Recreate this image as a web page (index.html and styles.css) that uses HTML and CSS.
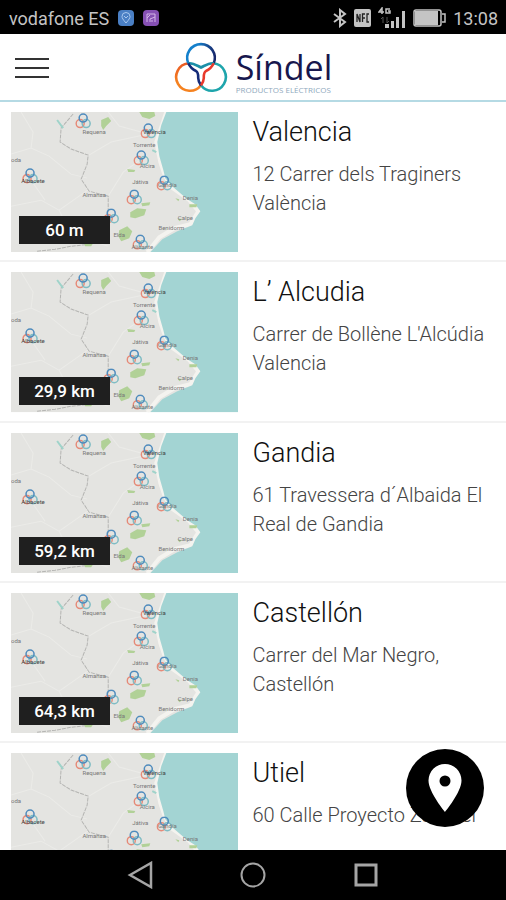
FILE: index.html
```html
<!DOCTYPE html>
<html lang="es">
<head>
    <meta charset="UTF-8">
    <meta name="viewport" content="width=device-width, initial-scale=1.0">
    <title>Síndel</title>
    <link rel="stylesheet" href="styles.css">
</head>
<body>
    <!-- Shared drawings -->
    <svg class="defs" width="0" height="0" aria-hidden="true">
        <symbol id="marker" viewBox="0 0 16 16">
            <g fill="none" stroke-width="1.5">
                <circle cx="5" cy="10.5" r="4" stroke="#e58a78"/>
                <circle cx="11" cy="10.5" r="4" stroke="#7fbcc4"/>
                <circle cx="8" cy="5" r="4" stroke="#4f8bbd"/>
            </g>
        </symbol>
        <symbol id="map" viewBox="0 0 227 140">
            <rect width="227" height="140" fill="#e4e4e1"/>
            <g fill="none" stroke="#ebebe8">
                <path d="M0 42 20 36 38 44 60 62 76 66M10 0 22 20 20 36M0 94 30 88 48 98 78 77M76 44 100 30 137 22M130 47 112 60 97 84M48 98 60 122 97 134M20 68 34 88M97 0 108 14 137 22"/>
            </g>
            <path d="M155 0 150 15 145 30 149 50 153 62 160 75 178 88 187 99 179 112 163 116 148 125 136 140" fill="none" stroke="#f4f3ef" stroke-width="4"/>
            <path d="M155 0 150 13 146 30 148 44 152 58 154 66 162 75 176 87 184 92 189 99 184 106 181 113 166 119 151 127 139 140H227V0Z" fill="#a3d4d3"/>
            <path d="M62 2 50 16 49 30 60 37 77 43 76 52 70 67 78 79 97 84 97 102M26 139 44 137 60 134 78 132" fill="none" stroke="#b4b4b2" stroke-dasharray="4 1"/>
            <path d="M46 8 52 16M141 38 145 40" stroke="#9fd3ca" stroke-width="2"/>
            <g fill="#b1d197">
                <path d="M128 0H143L144 4 138 7 131 5ZM90 8 97 5 100 9 95 14 92 18 90 14ZM119 100 126 96 135 97 133 103 124 106 119 105ZM108 118 116 114 121 119 118 126 110 129 107 124ZM116 57 124 58 123 60 117 60ZM130 91 139 90 138 93 131 94ZM178 92 186 92 185 95 178 95ZM73 131 82 131 80 134 74 134ZM164 86 168 87 167 89ZM166 106 171 107 168 109Z"/>
            </g>
            <use href="#marker" x="64" y="1" width="16" height="16"/>
            <use href="#marker" x="129" y="11" width="16" height="16"/>
            <use href="#marker" x="122" y="38" width="16" height="16"/>
            <use href="#marker" x="145" y="63" width="16" height="16"/>
            <use href="#marker" x="115" y="77" width="16" height="16"/>
            <use href="#marker" x="11" y="56" width="16" height="16"/>
            <use href="#marker" x="92" y="96" width="16" height="16"/>
            <use href="#marker" x="121" y="122" width="16" height="16"/>
            <g class="places">
                <text x="83" y="22">Requena</text>
                <text x="143" y="22" class="city">Valencia</text>
                <text x="133" y="35">Torrente</text>
                <text x="136" y="56">Alcira</text>
                <text x="129" y="72">Játiva</text>
                <text x="156" y="75">Gandía</text>
                <text x="22" y="71" class="city">Albacete</text>
                <text x="5" y="50">oda</text>
                <text x="83" y="85">Almansa</text>
                <text x="179" y="88">Denia</text>
                <text x="174" y="108">Calpe</text>
                <text x="160" y="118">Benidorm</text>
                <text x="108" y="125">Elda</text>
                <text x="131" y="137">Alicante</text>
            </g>
        </symbol>
    </svg>

    <div class="status-bar">
        <span>vodafone ES</span>
        <svg width="16" height="16" viewBox="0 0 16 16">
            <rect width="16" height="16" rx="4" fill="#4a7fc4"/>
            <path d="M8 13C5 9.500 4 8 4 6.500A4 4 0 0 1 12 6.500C12 8 11 9.500 8 13ZM6 6 8 8 10 6" fill="none" stroke="#a9c8ee"/>
        </svg>
        <svg class="app-icon" width="16" height="16" viewBox="0 0 16 16">
            <rect width="16" height="16" rx="4" fill="#8650b4"/>
            <path d="M4 12V4H12V12M4 8 7 5M7 12V9L12 7M9 12V10" fill="none" stroke="#d3b5e8"/>
        </svg>
        <div class="status-icons">
            <svg width="14" height="20" viewBox="0 0 14 20">
                <path d="M1 6 12 14 7 18V2L12 6 1 14" fill="none" stroke="#c4c4c4" stroke-width="2"/>
            </svg>
            <svg width="17" height="18" viewBox="0 0 17 18">
                <rect width="17" height="18" rx="2" fill="#c4c4c4"/>
                <path d="M3 13V5L6 13V5M8.500 13V5H11M8.500 9H11M15 5H13V13H15" fill="none" stroke="#222" stroke-width="1.300"/>
            </svg>
            <svg width="28" height="22" viewBox="0 0 28 22">
                <path d="M4 7V1L1 5H6M12 2H8V6H12V4H10" fill="none" stroke="#c4c4c4" stroke-width="1.500"/>
                <path d="M5 10V16M3 12 5 10M9 10V16M9 16 11 14" stroke="#555"/>
                <path d="M7 17H11V21H7ZM13 14H16V21H13ZM18 10H21V21H18ZM24 4H27V21H24Z" fill="#c4c4c4"/>
            </svg>
            <svg class="battery" width="33" height="18" viewBox="0 0 33 18">
                <rect x="1" y="1" width="27" height="16" rx="2" fill="none" stroke="#c4c4c4" stroke-width="1.500"/>
                <rect x="2" y="2" width="23" height="14" fill="#c4c4c4"/>
                <path d="M29 5H32V13H29" fill="none" stroke="#c4c4c4" stroke-width="1.500"/>
            </svg>
            <span>13:08</span>
        </div>
    </div>

    <header class="header">
        <button class="menu-btn" aria-label="Menú">
            <svg width="34" height="22" viewBox="0 0 34 22">
                <path d="M0 2H34M0 11H34M0 20H34" stroke="#333" stroke-width="2"/>
            </svg>
        </button>
        <a class="logo" href="#">
            <svg width="54" height="52" viewBox="0 0 54 52">
                <defs>
                    <linearGradient id="blue" x1="0" y1="0" x2="1" y2="0"><stop offset="0.400" stop-color="#1480cc"/><stop offset="1" stop-color="#18286c"/></linearGradient>
                    <linearGradient id="orange" x1="0" y1="1" x2="0" y2="0"><stop offset="0.300" stop-color="#f58220"/><stop offset="1" stop-color="#ea5a24"/></linearGradient>
                </defs>
                <g fill="none" stroke-width="2.600">
                    <path d="M14.300 21.300A13.800 13.800 0 1 0 27 43.300" stroke="url(#orange)"/>
                    <path d="M39.700 21.300A13.800 13.800 0 1 1 27 43.300" stroke="#1ea5ac"/>
                    <path d="M14.300 21.300A13.800 13.800 0 1 1 39.700 21.300" stroke="url(#blue)"/>
                    <path d="M14.300 21.300C19 20.500 22 23 27 25.500 32 23 35 20.500 39.700 21.300" stroke="#1b8fa8"/>
                    <path d="M14.300 21.300C16 25 18.500 27.500 22 29 24.500 30.500 24.200 33 24.200 36 24.300 39 25.500 41.500 27 43.300" stroke="#142a78"/>
                    <path d="M39.700 21.300C38 25 35.500 27.500 32 29 29.500 30.500 29.800 33 29.800 36 29.700 39 28.500 41.500 27 43.300" stroke="#e8392b"/>
                </g>
            </svg>
            <span class="logo-text">
                <span class="logo-name">Síndel</span>
                <span class="logo-tagline">PRODUCTOS ELÉCTRICOS</span>
            </span>
        </a>
    </header>

    <main class="content">
        <ul class="shops">
            <li class="shop">
                <div class="shop-map">
                    <svg viewBox="0 0 227 140"><use href="#map"/></svg>
                    <span class="distance">60 m</span>
                </div>
                <div class="shop-info">
                    <h2>Valencia</h2>
                    <p>12 Carrer dels Traginers València</p>
                </div>
            </li>
            <li class="shop">
                <div class="shop-map">
                    <svg viewBox="0 0 227 140"><use href="#map"/></svg>
                    <span class="distance">29,9 km</span>
                </div>
                <div class="shop-info">
                    <h2>L’ Alcudia</h2>
                    <p>Carrer de Bollène L'Alcúdia Valencia</p>
                </div>
            </li>
            <li class="shop">
                <div class="shop-map">
                    <svg viewBox="0 0 227 140"><use href="#map"/></svg>
                    <span class="distance">59,2 km</span>
                </div>
                <div class="shop-info">
                    <h2>Gandia</h2>
                    <p>61 Travessera d´Albaida El Real de Gandia</p>
                </div>
            </li>
            <li class="shop">
                <div class="shop-map">
                    <svg viewBox="0 0 227 140"><use href="#map"/></svg>
                    <span class="distance">64,3 km</span>
                </div>
                <div class="shop-info">
                    <h2>Castellón</h2>
                    <p>Carrer del Mar Negro, Castellón</p>
                </div>
            </li>
            <li class="shop">
                <div class="shop-map">
                    <svg viewBox="0 0 227 140"><use href="#map"/></svg>
                </div>
                <div class="shop-info">
                    <h2>Utiel</h2>
                    <p>60 Calle Proyecto Zamuel</p>
                </div>
            </li>
        </ul>
        <button class="map-btn" aria-label="Ver mapa">
            <svg width="34" height="48" viewBox="0 0 34 48">
                <path d="M17 0A16.500 16.500 0 0 0 .5 16.500C.5 28 17 48 17 48S33.500 28 33.500 16.500A16.500 16.500 0 0 0 17 0Z" fill="#fff"/>
                <circle cx="17" cy="17" r="5.500"/>
            </svg>
        </button>
    </main>

    <nav class="nav-bar">
        <button aria-label="Atrás">
            <svg width="26" height="28" viewBox="0 0 26 28"><path d="M3 14 24 2V26Z" fill="none" stroke="#a5a5a5" stroke-width="2.500"/></svg>
        </button>
        <button aria-label="Inicio">
            <svg width="26" height="28" viewBox="0 0 26 28"><circle cx="13" cy="14" r="11.500" fill="none" stroke="#a5a5a5" stroke-width="2"/></svg>
        </button>
        <button aria-label="Recientes">
            <svg width="26" height="28" viewBox="0 0 26 28"><rect x="3" y="4" width="20" height="20" fill="none" stroke="#a5a5a5" stroke-width="3"/></svg>
        </button>
    </nav>
</body>
</html>
```
FILE: styles.css
```css
* {
    box-sizing: border-box;
}
body {
    font-family: Roboto, sans-serif;
    background-color: white;
    color: #111;
    margin: 0;
    height: 100vh;
    display: flex;
    flex-direction: column;
}
button {
    background: none;
    border: none;
    padding: 0;
    cursor: pointer;
}
svg {
    display: block;
}
.defs {
    position: absolute;
}
.status-bar {
    display: flex;
    align-items: center;
    background-color: black;
    color: #c4c4c4;
    height: 34px;
    padding: 2px 8px 0 9px;
    font-size: 18px;
    gap: 9px;
}
.status-icons {
    display: flex;
    align-items: center;
    margin-left: auto;
    gap: 7px;
}
.header {
    display: grid;
    grid-template-columns: 1fr auto 1fr;
    align-items: center;
    height: 68px;
    padding: 0 15px;
    border-bottom: 2px solid #b5dae4;
}
.menu-btn {
    justify-self: start;
    padding-top: 2px;
}
.logo {
    display: flex;
    align-items: center;
    gap: 8px;
    padding-top: 2px;
    text-decoration: none;
}
.logo-text {
    display: flex;
    flex-direction: column;
    padding-top: 6px;
    font-family: "Open Sans", sans-serif;
}
.logo-name {
    color: #17174d;
    font-size: 34px;
    line-height: 38px;
}
.logo-tagline {
    color: #8fa9bd;
    font-size: 8px;
    line-height: 8px;
}
.content {
    position: relative;
    flex: 1;
    min-height: 0;
}
.shops {
    list-style: none;
    margin: 0;
    padding: 0;
    height: 100%;
    overflow: hidden;
}
.shop {
    display: flex;
    gap: 14px;
    padding: 10px 11px 8px;
    border-bottom: 2px solid #f2f2f2;
}
.shop-map {
    position: relative;
    flex: 0 0 47%;
}
.shop-map svg {
    width: 100%;
}
.places {
    fill: #777;
    font-size: 6px;
    text-anchor: middle;
}
.places .city {
    fill: #444;
}
.distance {
    position: absolute;
    left: 8px;
    bottom: 8px;
    width: 91px;
    background-color: #1f1f1f;
    color: white;
    font-size: 17px;
    font-weight: 500;
    line-height: 28px;
    text-align: center;
}
.shop-info {
    flex: 1;
}
.shop-info h2 {
    margin: 4px 0 12px;
    font-size: 27px;
    font-weight: 300;
    line-height: 32px;
}
.shop-info p {
    margin: 0;
    color: #444;
    font-size: 20px;
    font-weight: 300;
    line-height: 29px;
}
.map-btn {
    position: absolute;
    right: 22px;
    bottom: 23px;
    display: flex;
    justify-content: center;
    align-items: center;
    width: 78px;
    height: 78px;
    border-radius: 50%;
    background-color: black;
}
.nav-bar {
    display: flex;
    justify-content: center;
    align-items: center;
    gap: 87px;
    height: 50px;
    background-color: black;
}
```
